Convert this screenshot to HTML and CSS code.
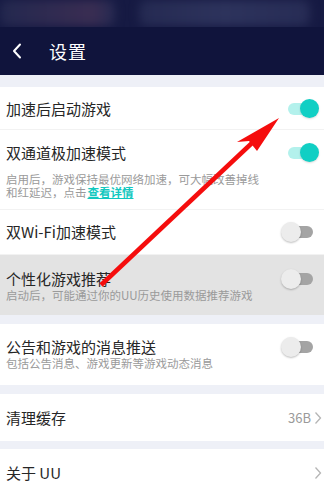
FILE: index.html
```html
<!DOCTYPE html>
<html lang="zh-CN">
<head>
    <meta charset="UTF-8">
    <meta name="viewport" content="width=device-width, initial-scale=1.0">
    <title>设置</title>
    <link rel="stylesheet" href="styles.css">
</head>
<body>
    <div class="header">
        <div class="status-bar">
            <div class="blob blob-left"></div>
            <div class="blob blob-right"></div>
        </div>
        <div class="nav-bar">
            <svg class="back-icon" width="10" height="16" viewBox="0 0 10 16">
                <path d="M8 1.5 L2 8 L8 14.5" fill="none" stroke="#fff" stroke-width="2" stroke-linecap="round" stroke-linejoin="round"/>
            </svg>
            <span class="nav-title">设置</span>
        </div>
    </div>

    <div class="group">
        <div class="row row-short">
            <div class="row-text">
                <div class="row-title">加速后启动游戏</div>
            </div>
            <div class="toggle on"><span class="track"></span><span class="knob"></span></div>
        </div>
        <div class="row row-double">
            <div class="row-text">
                <div class="row-title">双通道极加速模式</div>
                <div class="row-desc desc-wide">启用后，游戏保持最优网络加速，可大幅改善掉线<br>和红延迟，点击<a class="link" href="#">查看详情</a></div>
            </div>
            <div class="toggle on"><span class="track"></span><span class="knob"></span></div>
        </div>
        <div class="row row-wifi">
            <div class="row-text">
                <div class="row-title">双Wi-Fi加速模式</div>
            </div>
            <div class="toggle"><span class="track"></span><span class="knob"></span></div>
        </div>
        <div class="row row-desc-row highlighted">
            <div class="row-text">
                <div class="row-title">个性化游戏推荐</div>
                <div class="row-desc">启动后，可能通过你的UU历史使用数据推荐游戏</div>
            </div>
            <div class="toggle"><span class="track"></span><span class="knob"></span></div>
        </div>
    </div>

    <div class="group">
        <div class="row row-desc-row">
            <div class="row-text">
                <div class="row-title">公告和游戏的消息推送</div>
                <div class="row-desc">包括公告消息、游戏更新等游戏动态消息</div>
            </div>
            <div class="toggle"><span class="track"></span><span class="knob"></span></div>
        </div>
    </div>

    <div class="group">
        <div class="row row-link">
            <div class="row-title">清理缓存</div>
            <div class="row-right">
                <span class="row-value">36B</span>
                <svg width="8" height="14" viewBox="0 0 8 14"><path d="M1.5 1.5 L6.5 7 L1.5 12.5" fill="none" stroke="#b5b5b5" stroke-width="1.3"/></svg>
            </div>
        </div>
    </div>

    <div class="group">
        <div class="row row-link">
            <div class="row-title">关于 UU</div>
            <div class="row-right">
                <svg width="8" height="14" viewBox="0 0 8 14"><path d="M1.5 1.5 L6.5 7 L1.5 12.5" fill="none" stroke="#b5b5b5" stroke-width="1.3"/></svg>
            </div>
        </div>
    </div>

    <!-- flèche rouge d'annotation par-dessus la page -->
    <svg class="annotation" width="324" height="484" viewBox="0 0 324 484">
        <line x1="101" y1="285" x2="252" y2="143" stroke="#f50d0d" stroke-width="4.5"/>
        <polygon points="279,118 237,142 249,141 257,151" fill="#f50d0d"/>
    </svg>
</body>
</html>
```

FILE: styles.css
```css
* {
    margin: 0;
    padding: 0;
    box-sizing: border-box;
}

body {
    background: #eef0f7;
    font-family: "Noto Sans CJK SC", "Noto Sans", sans-serif;
    width: 324px;
    height: 484px;
    overflow: hidden;
    position: relative;
}

.header {
    background: #10143c;
}

.status-bar {
    height: 27px;
    display: flex;
    gap: 24px;
    overflow: hidden;
    padding: 0 14px 0 0;
    background: #161a43;
}

.blob {
    height: 26px;
    border-radius: 8px;
    filter: blur(5px);
}

.blob-left {
    width: 115px;
    background: linear-gradient(90deg, #23284f, #3a2d52 80%, #262a52);
}

.blob-right {
    flex: 1;
    background: linear-gradient(90deg, #252a52, #2d335c 50%, #272c55);
}

.nav-bar {
    height: 48px;
    display: flex;
    align-items: center;
    padding-left: 12px;
}

.back-icon {
    margin-right: 27px;
}

.nav-title {
    color: #fff;
    font-size: 18px;
    letter-spacing: 1px;
}

.group {
    background: #fff;
    margin-top: 12px;
}

.group + .group {
    margin-top: 8px;
}

.group:nth-of-type(3),
.group:nth-of-type(4) {
    margin-top: 9px;
}

.row {
    display: flex;
    align-items: flex-start;
    justify-content: space-between;
    padding: 0 5px 0 6px;
    border-bottom: 1px solid #f2f2f2;
}

.row:last-child {
    border-bottom: none;
}

.row-short {
    height: 43px;
    align-items: center;
    padding-top: 2px;
}

.row-double {
    height: 80px;
    padding-top: 13px;
}

.row-wifi {
    height: 45px;
    align-items: center;
}

.row-desc-row {
    height: 61px;
    padding-top: 13px;
}

.group:nth-of-type(2) .row-desc-row {
    height: 60px;
    padding-top: 14px;
}

.highlighted {
    background: #e3e3e3;
}

.row-title {
    font-size: 15px;
    line-height: 20px;
    color: #262626;
}

.row-desc {
    font-size: 11.5px;
    line-height: 13px;
    color: #9a9a9a;
}

.desc-wide {
    margin-top: 10px;
}

.link {
    margin-left: 1px;
    color: #12c8bf;
    font-weight: bold;
    text-decoration: underline;
}

.toggle {
    position: relative;
    width: 38px;
    height: 20px;
    flex-shrink: 0;
}

.track {
    position: absolute;
    left: 9px;
    top: 4px;
    width: 23px;
    height: 12px;
    border-radius: 6px;
    background: #a4a4a4;
}

.knob {
    position: absolute;
    left: 0;
    top: 0;
    width: 20px;
    height: 20px;
    border-radius: 50%;
    background: #ececec;
    box-shadow: 0 1px 2px rgba(0,0,0,0.25);
}

.toggle.on .track {
    left: 7px;
    background: #b3f1ec;
}

.toggle.on .knob {
    left: 19px;
    width: 19px;
    height: 19px;
    background: #11cfc4;
    box-shadow: 0 1px 2px rgba(0,0,0,0.15);
}

.row-link {
    height: 47px;
    align-items: center;
    padding-right: 2px;
}

.row-right {
    display: flex;
    align-items: center;
    gap: 3px;
}

.row-value {
    font-size: 13px;
    color: #9a9a9a;
}

.annotation {
    position: absolute;
    left: 0;
    top: 0;
    pointer-events: none;
}
```
